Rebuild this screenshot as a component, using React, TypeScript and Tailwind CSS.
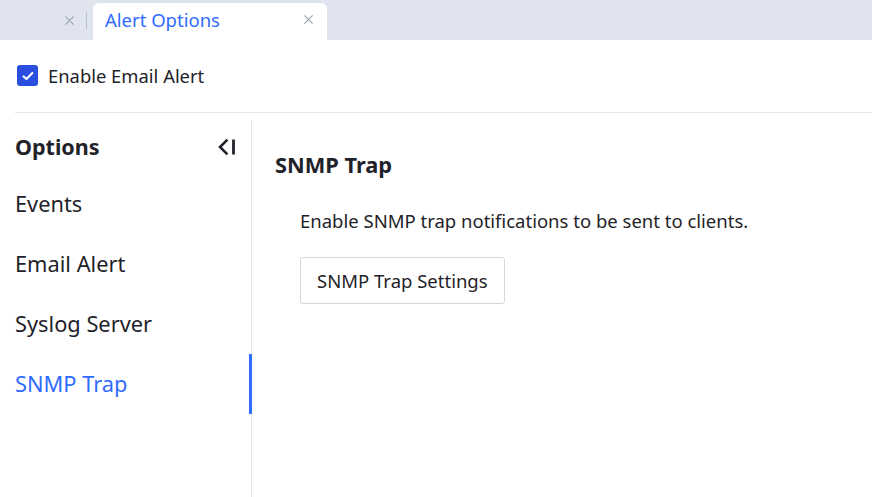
import { useState } from "react";

const MENU_ITEMS = ["Events", "Email Alert", "Syslog Server", "SNMP Trap"];

function CloseIcon({ className }: { className?: string }) {
  return (
    <svg viewBox="0 0 12 12" className={className} fill="none" stroke="currentColor" strokeWidth="1.2">
      <path d="M1.5 1.5l9 9M10.5 1.5l-9 9" />
    </svg>
  );
}

function CollapseIcon() {
  return (
    <svg viewBox="0 0 20 20" className="w-[20px] h-[20px]" fill="none" stroke="#1f2329" strokeWidth="2.6">
      <path d="M9.5 3.5L3 10l6.5 6.5" strokeLinecap="square" />
      <path d="M16.5 2.5v15" strokeWidth="2.8" />
    </svg>
  );
}

export default function App() {
  const [enabled, setEnabled] = useState(true);
  const [active, setActive] = useState("SNMP Trap");

  return (
    <div
      className="w-[872px] h-[497px] bg-white text-[#1f2329] overflow-hidden flex flex-col"
      style={{ fontFamily: '"Noto Sans", "Open Sans", sans-serif' }}
    >
      {/* tab bar */}
      <div className="h-[40px] bg-[#dfe4ee] flex items-end shrink-0">
        <div className="h-[37px] w-[76px] flex items-center justify-end pr-[1px] pb-[2px] text-[#9ca3af]">
          <CloseIcon className="w-[11px] h-[11px]" />
        </div>
        <div className="h-[37px] flex items-center pl-[10px] pr-[6px] pb-[2px]">
          <div className="w-px h-[17px] bg-[#b8bfcc]" />
        </div>
        <div className="h-[37px] w-[234px] bg-white rounded-t-[6px] flex items-center justify-between pl-[12px] pr-[13px] pb-[4px]">
          <span className="text-[18.5px] text-[#2f6bff]">Alert Options</span>
          <CloseIcon className="w-[11px] h-[11px] text-[#9ca3af]" />
        </div>
      </div>

      {/* checkbox row */}
      <div className="h-[72px] flex items-center px-[17px] shrink-0">
        <label className="flex items-center gap-[10px] cursor-pointer">
          <button
            onClick={() => setEnabled(!enabled)}
            className={`w-[21px] h-[21px] rounded-[3px] flex items-center justify-center ${enabled ? "bg-[#2a4fe0]" : "border border-gray-400"}`}
          >
            {enabled && (
              <svg viewBox="0 0 16 16" className="w-[14px] h-[14px]" fill="none" stroke="white" strokeWidth="2.4">
                <path d="M3 8.5l3.2 3L13 4.5" strokeLinecap="round" strokeLinejoin="round" />
              </svg>
            )}
          </button>
          <span className="text-[18.4px]">Enable Email Alert</span>
        </label>
      </div>
      <div className="ml-[15px] h-px bg-[#e3e5ea] shrink-0" />

      <div className="flex flex-1 pt-[7px]">
        {/* sidebar */}
        <aside className="w-[252px] border-r border-[#e3e5ea] flex flex-col shrink-0">
          <div className="h-[54px] flex items-center justify-between pl-[15px] pr-[14px]">
            <span className="text-[21.5px] font-bold">Options</span>
            <CollapseIcon />
          </div>
          {MENU_ITEMS.map((item) => {
            const isActive = item === active;
            return (
              <button
                key={item}
                onClick={() => setActive(item)}
                className={`relative h-[60px] text-left pl-[15px] text-[21.8px] ${isActive ? "text-[#2f6bff]" : ""}`}
              >
                {item}
                {isActive && <span className="absolute right-[-1px] top-0 bottom-0 w-[3px] bg-[#2f6bff]" />}
              </button>
            );
          })}
        </aside>

        {/* content */}
        <main className="flex-1 pl-[23px] pt-[30px]">
          <h2 className="text-[21.8px] leading-[30px] font-bold">SNMP Trap</h2>
          <div className="pl-[25px] pt-[28px]">
            <p className="text-[18.5px] leading-[26px]">Enable SNMP trap notifications to be sent to clients.</p>
            <button className="mt-[23px] h-[47px] px-[16px] border border-[#d4d7dd] rounded-[3px] text-[18.5px]">
              SNMP Trap Settings
            </button>
          </div>
        </main>
      </div>
    </div>
  );
}
